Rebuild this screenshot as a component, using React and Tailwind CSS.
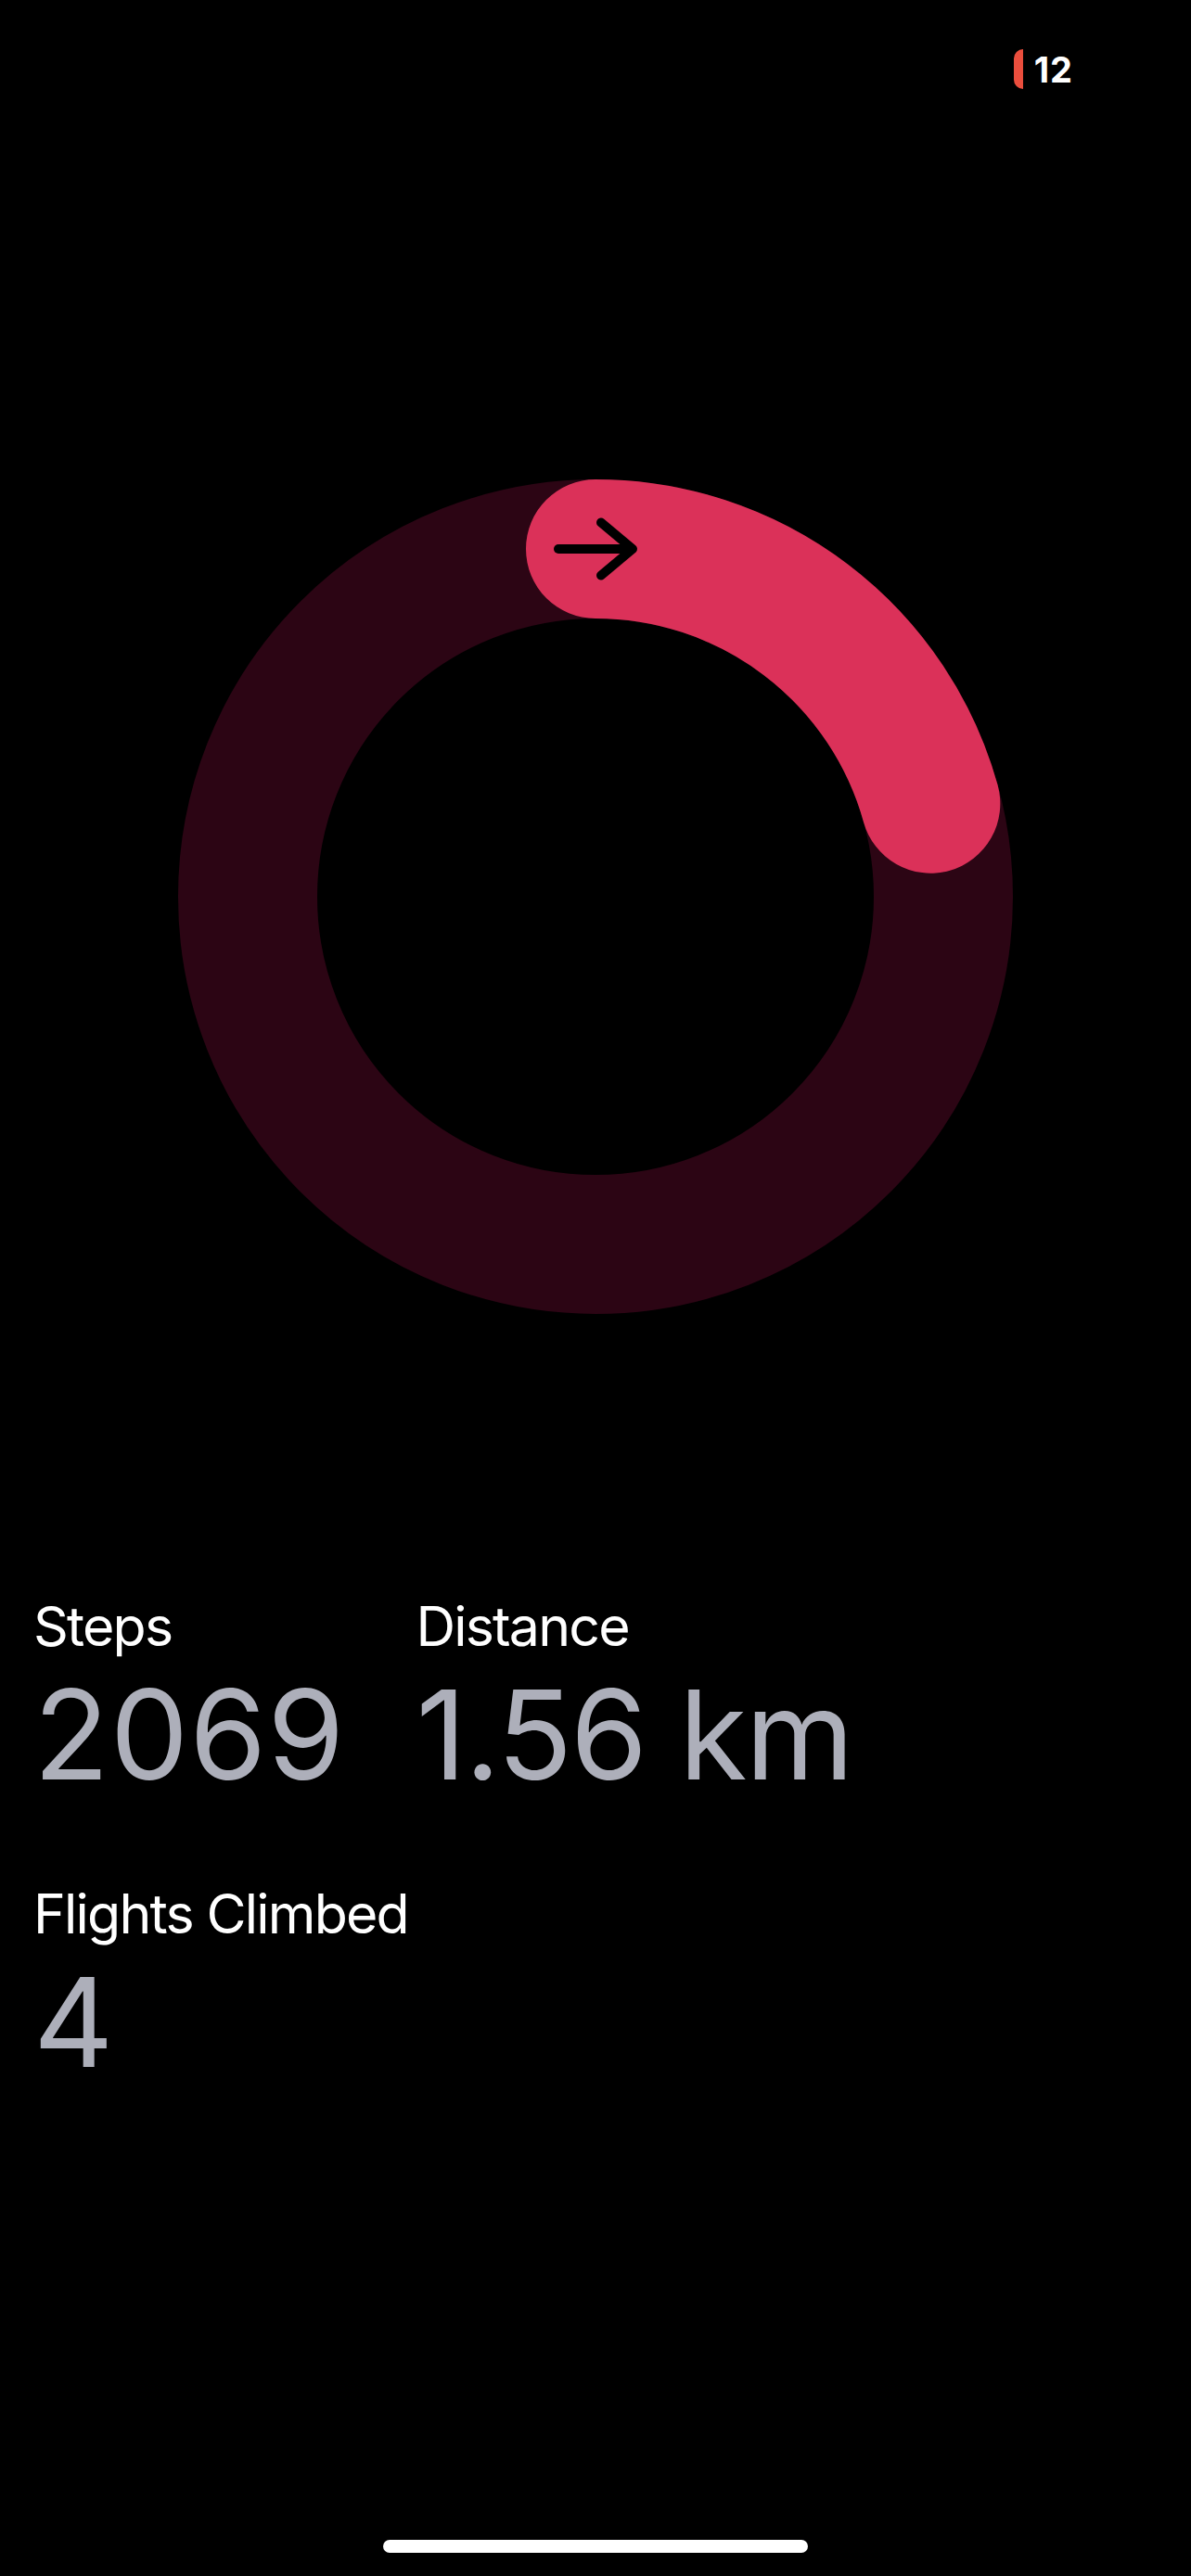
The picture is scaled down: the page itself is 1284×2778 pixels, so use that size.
import React from "react";

const STEPS = 2069;
const GOAL = 10000;

function Ring() {
  const cx = 450;
  const cy = 450;
  const r = 375;
  const progress = STEPS / GOAL;
  const a = progress * 2 * Math.PI;
  const ex = cx + r * Math.sin(a);
  const ey = cy - r * Math.cos(a);
  const large = progress > 0.5 ? 1 : 0;
  const d = `M ${cx} ${cy - r} A ${r} ${r} 0 ${large} 1 ${ex.toFixed(2)} ${ey.toFixed(2)}`;
  return (
    <svg width="900" height="900" viewBox="0 0 900 900" className="block">
      <circle cx={cx} cy={cy} r={r} fill="none" stroke="#2C0514" strokeWidth="150" />
      <path d={d} fill="none" stroke="#DB3159" strokeWidth="150" strokeLinecap="round" />
      <g stroke="#000" strokeWidth="10" strokeLinecap="round" strokeLinejoin="round" fill="none">
        <line x1={cx - 40} y1={cy - r} x2={cx + 39} y2={cy - r} />
        <polyline points={`${cx + 6},${cy - r - 28.5} ${cx + 40},${cy - r} ${cx + 6},${cy - r + 28.5}`} />
      </g>
    </svg>
  );
}

function Stat({ label, value, valueClass }) {
  return (
    <div className="flex flex-col gap-[20px]">
      <div className="text-[59px] leading-none text-white tracking-[-1.8px]">{label}</div>
      <div className={`text-[134px] leading-none text-[#ADAFBA] ${valueClass}`}>{value}</div>
    </div>
  );
}

export default function App() {
  return (
    <div className="w-full h-[2778px] bg-black font-['Inter','Noto_Sans',sans-serif] relative overflow-hidden">
      <div className="h-[150px] flex justify-end items-start pt-[53px] pr-[127px]">
        <div className="flex items-center gap-[12px] h-[43px]">
          <div className="w-[10px] h-[43px] rounded-l-[12px] bg-[#EB4E3D]" />
          <div className="text-[38px] leading-none font-bold text-white tracking-[1px]">12</div>
        </div>
      </div>
      <div className="flex justify-center mt-[367px]">
        <Ring />
      </div>
      <div className="mt-[307px] pl-[36px] flex flex-col gap-[97px]">
        <div className="flex gap-[76px]">
          <Stat label="Steps" value="2069" valueClass="tracking-[1px]" />
          <Stat label="Distance" value="1.56 km" valueClass="tracking-[-2px]" />
        </div>
        <Stat label="Flights Climbed" value="4" valueClass="tracking-[-2px]" />
      </div>
      <div className="absolute left-1/2 -translate-x-1/2 top-[2739px] w-[458px] h-[14px] rounded-full bg-white" />
    </div>
  );
}
